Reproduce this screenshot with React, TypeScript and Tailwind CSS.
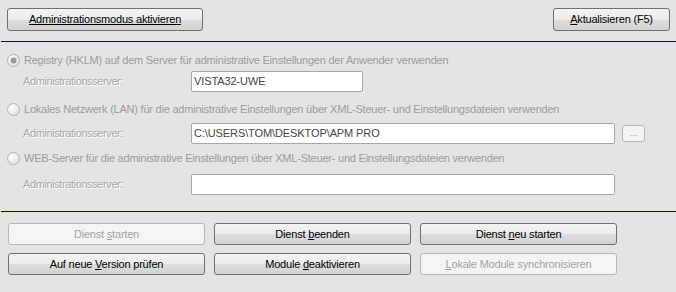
import React from "react";

const font = { fontFamily: '"Liberation Sans", Arial, sans-serif' };

const Radio = ({ checked }: { checked?: boolean }) => (
  <svg width="13" height="13" viewBox="0 0 13 13" className="shrink-0">
    <defs>
      <radialGradient id="rg" cx="0.35" cy="0.35" r="0.8">
        <stop offset="0" stopColor="#ffffff" />
        <stop offset="1" stopColor="#dcdcdc" />
      </radialGradient>
    </defs>
    <circle cx="6.5" cy="6.5" r="6" fill="url(#rg)" stroke="#b4b4b4" />
    {checked && <circle cx="6.5" cy="6.5" r="3" fill="#9a9a9a" />}
  </svg>
);

const Btn = ({
  children,
  disabled,
  className = "",
}: {
  children: React.ReactNode;
  disabled?: boolean;
  className?: string;
}) => (
  <div
    className={
      "flex items-center justify-center rounded-[3px] border text-[11px] leading-none tracking-[-0.2px] " +
      (disabled
        ? "border-[#b5b8ba] bg-[#f4f4f4] text-[#a3a3a3] "
        : "border-[#707070] bg-[linear-gradient(#f3f3f3_0%,#ececec_50%,#dedede_51%,#d2d2d2_100%)] text-black ") +
      className
    }
  >
    {children}
  </div>
);

const Field = ({ value, className = "" }: { value?: string; className?: string }) => (
  <div
    className={
      "flex h-[21px] items-center rounded-[2px] border border-[#a7a7a7] bg-white pl-[2px] text-[11px] tracking-[-0.1px] text-[#454545] " +
      className
    }
  >
    {value}
  </div>
);

const Label = () => (
  <span className="w-[168px] shrink-0 text-[11px] tracking-[-0.4px] text-[#a9a9a9] [text-shadow:1px_1px_0_#ffffff]">
    Administrationsserver:
  </span>
);

const RadioRow = ({ text, checked }: { text: string; checked?: boolean }) => (
  <div className="flex h-[14px] items-center gap-[4px] pl-[7px] text-[11px] tracking-[-0.22px] text-[#9c9c9c]">
    <Radio checked={checked} />
    <span>{text}</span>
  </div>
);

export default function App() {
  return (
    <div style={font} className="flex h-[292px] w-[676px] flex-col bg-[#e4e4e4]">
      {/* top buttons */}
      <div className="flex justify-between pl-[7px] pr-[6px] pt-[8px]">
        <Btn className="h-[23px] w-[196px]">
          <span className="underline">Administrationsmodus aktivieren</span>
        </Btn>
        <Btn className="h-[23px] w-[117px]">
          <span>
            <u>A</u>ktualisieren (F5)
          </span>
        </Btn>
      </div>

      <div className="ml-px mt-[10px] h-px bg-[#0b0b6e]" />

      {/* registry */}
      <div className="mt-[11px]">
        <RadioRow checked text="Registry (HKLM) auf dem Server für administrative Einstellungen der Anwender verwenden" />
      </div>
      <div className="mt-[4px] flex items-center pl-[23px]">
        <Label />
        <Field value="VISTA32-UWE" className="w-[172px]" />
      </div>

      {/* LAN */}
      <div className="mt-[10px]">
        <RadioRow text="Lokales Netzwerk (LAN) für die administrative Einstellungen über XML-Steuer- und Einstellungsdateien verwenden" />
      </div>
      <div className="mt-[7px] flex items-center pl-[23px]">
        <Label />
        <Field value="C:\USERS\TOM\DESKTOP\APM PRO" className="w-[424px]" />
        <div className="ml-[7px] flex h-[17px] w-[23px] items-end justify-center rounded-[3px] border border-[#b5b8ba] bg-[#f4f4f4] pb-[3px] text-[9px] leading-none text-[#a3a3a3]">
          ...
        </div>
      </div>

      {/* web */}
      <div className="mt-[7px]">
        <RadioRow text="WEB-Server für die administrative Einstellungen über XML-Steuer- und Einstellungsdateien verwenden" />
      </div>
      <div className="mt-[9px] flex items-center pl-[23px]">
        <Label />
        <Field className="w-[424px]" />
      </div>

      <div className="ml-px mt-[16px] h-px bg-[#0b0b6e]" />

      {/* action buttons */}
      <div className="mt-[11px] grid w-[617px] grid-cols-3 gap-x-[9px] gap-y-[8px] pl-[8px]">
        <Btn disabled className="h-[22px]">
          <span>
            Dienst <u>s</u>tarten
          </span>
        </Btn>
        <Btn className="h-[22px]">
          <span>
            Dienst <u>b</u>eenden
          </span>
        </Btn>
        <Btn className="h-[22px]">
          <span>
            Dienst <u>n</u>eu starten
          </span>
        </Btn>
        <Btn className="h-[22px]">
          <span>
            Auf neue <u>V</u>ersion prüfen
          </span>
        </Btn>
        <Btn className="h-[22px]">
          <span>
            Module <u>d</u>eaktivieren
          </span>
        </Btn>
        <Btn disabled className="h-[22px]">
          <span>
            <u>L</u>okale Module synchronisieren
          </span>
        </Btn>
      </div>
    </div>
  );
}
